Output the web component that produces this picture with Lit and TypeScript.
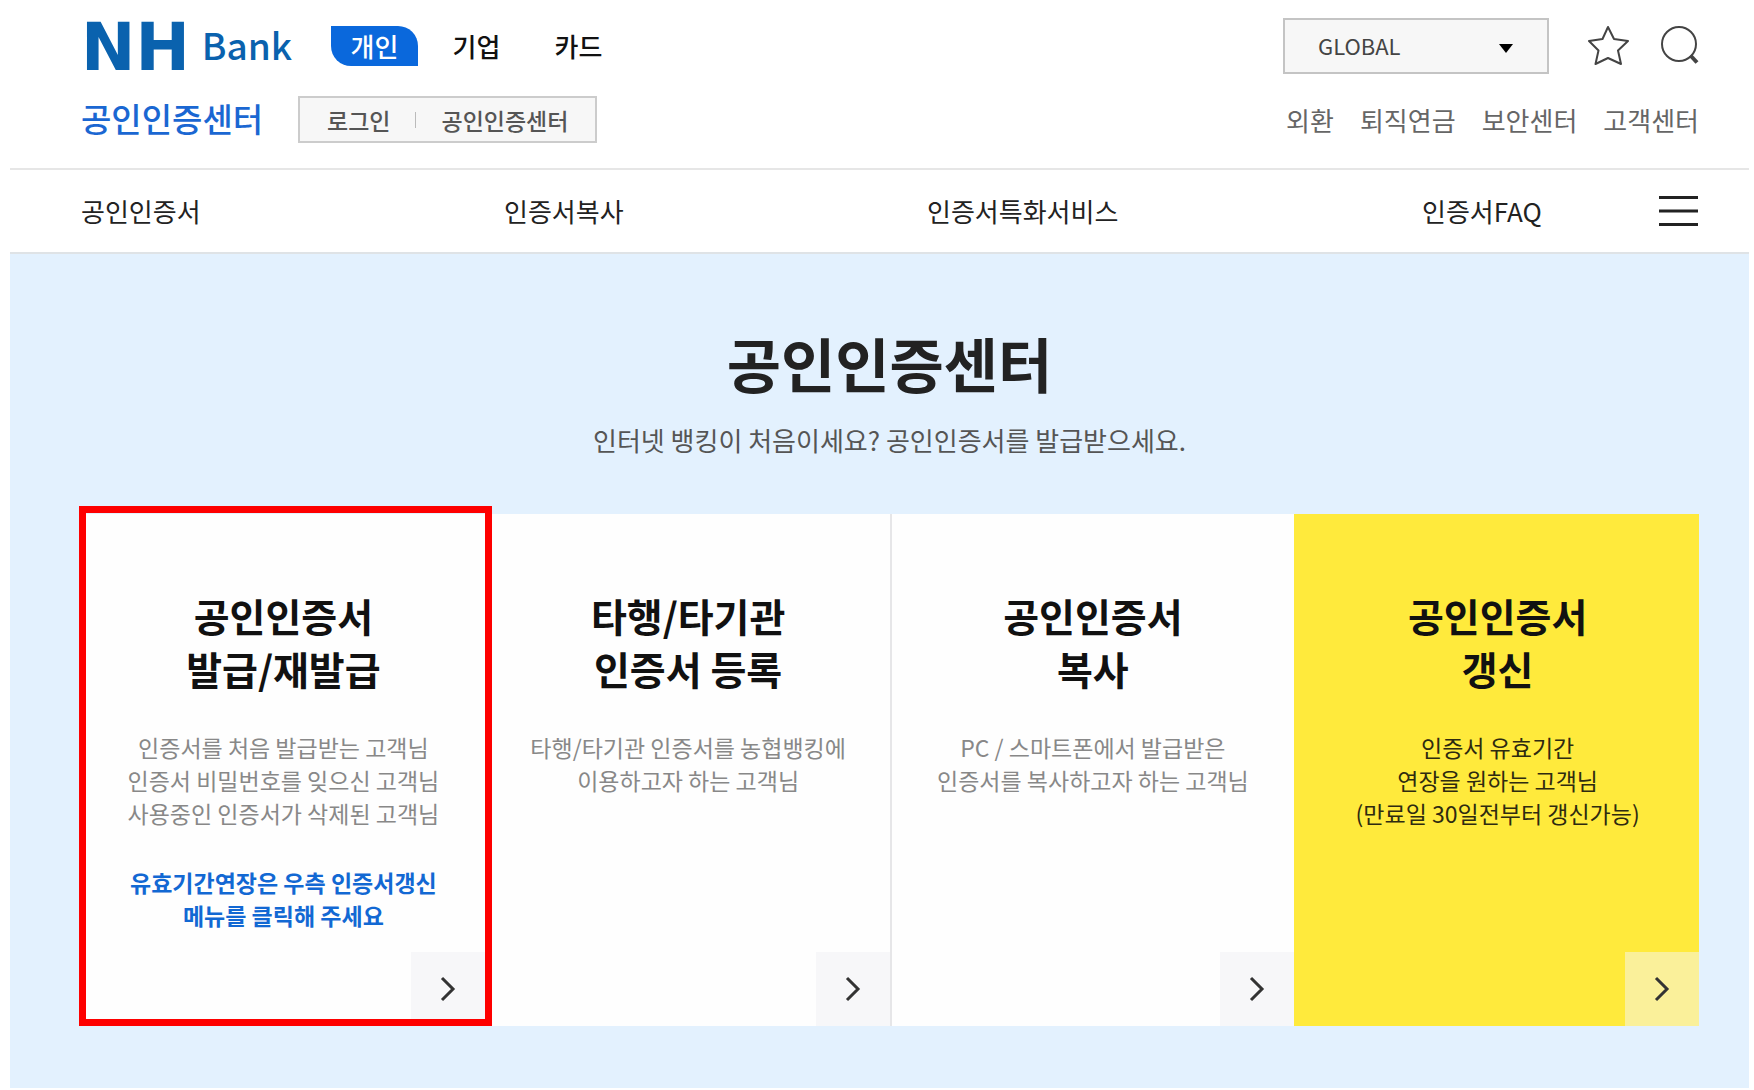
import { LitElement, html, css, nothing } from "lit";
import { customElement, property } from "lit/decorators.js";
import { classMap } from "lit/directives/class-map.js";

interface Service {
  title: string[];
  desc: string[];
  note?: string[];
  accent?: boolean;
  marked?: boolean;
}

const SERVICES: Service[] = [
  {
    title: ["공인인증서", "발급/재발급"],
    desc: ["인증서를 처음 발급받는 고객님", "인증서 비밀번호를 잊으신 고객님", "사용중인 인증서가 삭제된 고객님"],
    note: ["유효기간연장은 우측 인증서갱신", "메뉴를 클릭해 주세요"],
    marked: true,
  },
  {
    title: ["타행/타기관", "인증서 등록"],
    desc: ["타행/타기관 인증서를 농협뱅킹에", "이용하고자 하는 고객님"],
  },
  {
    title: ["공인인증서", "복사"],
    desc: ["PC / 스마트폰에서 발급받은", "인증서를 복사하고자 하는 고객님"],
  },
  {
    title: ["공인인증서", "갱신"],
    desc: ["인증서 유효기간", "연장을 원하는 고객님", "(만료일 30일전부터 갱신가능)"],
    accent: true,
  },
];

const lines = (rows: string[]) => rows.map((row) => html`<span class="line">${row}</span>`);

@customElement("service-card")
export class ServiceCard extends LitElement {
  @property({ attribute: false }) service!: Service;

  static styles = css`
    :host { display: flex; min-width: 0; }
    .card {
      position: relative;
      flex: 1;
      min-width: 0;
      display: flex;
      flex-direction: column;
      align-items: center;
      padding-top: 75px;
      background: #fefefe;
      border-left: 2px solid #e6e6e8;
      color: #888;
      text-align: center;
      text-decoration: none;
    }
    .accent { background: #ffea3c; border-left-color: #ffea3c; color: #2e2a10; }
    .line { display: block; }
    .title {
      margin: 0;
      font-size: 39px;
      line-height: 53px;
      font-weight: 700;
      color: #111;
    }
    .desc, .note { margin: 36px 0 0; font-size: 23px; line-height: 33px; }
    .note { color: #1268d3; font-weight: 700; }
    .go {
      align-self: flex-end;
      display: flex;
      align-items: center;
      justify-content: center;
      width: 74px;
      height: 74px;
      margin-top: auto;
      background: #f7f7f9;
      color: #333;
    }
    .accent .go { background: #faf09a; }
    .marked::after {
      content: "";
      position: absolute;
      inset: -8px -7px 0 -3px;
      border: 7px solid #fe0000;
      z-index: 1;
    }
  `;

  render() {
    const s = this.service;
    return html`
      <a href="#" class=${classMap({ card: true, accent: !!s.accent, marked: !!s.marked })}>
        <h2 class="title">${lines(s.title)}</h2>
        <p class="desc">${lines(s.desc)}</p>
        ${s.note ? html`<p class="note">${lines(s.note)}</p>` : nothing}
        <span class="go">
          <svg width="16" height="26" viewBox="0 0 16 26" fill="none" stroke="currentColor" stroke-width="3" aria-hidden="true">
            <path d="M2 2 L13 13 L2 24" />
          </svg>
        </span>
      </a>
    `;
  }
}

@customElement("app-root")
export class AppRoot extends LitElement {
  static styles = css`
    :host {
      display: block;
      padding: 0 5px 2px 10px;
      background: #fff;
      color: #222;
      font-family: "Noto Sans CJK KR", "Noto Sans", sans-serif;
      font-size: 26px;
      line-height: 36px;
    }
    a { color: inherit; text-decoration: none; }
    button { padding: 0; border: 0; background: none; color: inherit; font: inherit; cursor: pointer; }
    svg { display: block; }
    .header {
      display: flex;
      flex-direction: column;
      gap: 22px;
      padding: 18px 50px 25px 71px;
      border-bottom: 2px solid #e6e6e6;
    }
    .bar { display: flex; align-items: center; justify-content: space-between; }
    .top { height: 56px; }
    .sub { height: 47px; }
    .side { display: flex; align-items: center; }
    .logo { display: flex; align-items: center; gap: 12px; width: 250px; color: #0a62ae; white-space: nowrap; }
    .mark { padding-top: 4px; font: 700 65px/56px "DejaVu Sans", sans-serif; }
    .word { padding-bottom: 4px; font-size: 37px; line-height: 52px; font-weight: 500; }
    .tabs { display: flex; gap: 15px; }
    .tab { width: 87px; line-height: 40px; text-align: center; font-weight: 500; color: #111; }
    .current { background: #0a68dc; color: #fff; border-radius: 0 20px 0 20px; }
    .section { width: 217px; padding-bottom: 4px; font-size: 33px; line-height: 40px; font-weight: 500; color: #1a67d2; white-space: nowrap; }
    .account {
      display: flex;
      align-items: center;
      height: 47px;
      box-sizing: border-box;
      padding: 0 27px;
      border: 2px solid #ccc;
      background: #f7f7f7;
      font-size: 23px;
      font-weight: 500;
      color: #555;
    }
    .split { width: 1px; height: 16px; margin: 0 25px; background: #bbb; }
    .region { position: relative; color: #444; }
    .select {
      appearance: none;
      width: 266px;
      height: 56px;
      padding: 0 33px 2px;
      border: 2px solid #c4c4c4;
      border-radius: 0;
      background: #f7f7f7;
      color: inherit;
      font: 400 22px/30px "Noto Sans CJK KR", sans-serif;
    }
    .caret { position: absolute; right: 36px; top: 25px; pointer-events: none; }
    .star { margin-left: 39px; }
    .search { margin-left: 31px; }
    .links { display: flex; gap: 26px; color: #666; }
    .nav {
      display: grid;
      grid-template-columns: 423fr 423fr 495fr 237fr 40px;
      align-items: center;
      height: 82px;
      padding: 0 50px 0 71px;
      border-bottom: 2px solid #dfe3e6;
    }
    .main { padding: 73px 50px 62px 70px; background: #e3f1fe; }
    .heading { margin: 0; font-size: 59px; line-height: 72px; font-weight: 700; text-align: center; color: #222; }
    .lead { margin: 23px 0 56px; text-align: center; color: #555; }
    .cards { display: grid; grid-template-columns: repeat(4, 1fr); min-height: 512px; }
  `;

  render() {
    return html`
      <header class="header">
        <div class="bar top">
          <div class="side">
            <a class="logo" href="#"><span class="mark">NH</span><span class="word">Bank</span></a>
            <nav class="tabs">
              <a class="tab current" href="#">개인</a>
              <a class="tab" href="#">기업</a>
              <a class="tab" href="#">카드</a>
            </nav>
          </div>
          <div class="side">
            <div class="region">
              <select class="select" aria-label="GLOBAL"><option>GLOBAL</option></select>
              <svg class="caret" width="14" height="10" viewBox="0 0 14 10" aria-hidden="true"><path d="M0 1H14L7 10Z" fill="#000" /></svg>
            </div>
            <button class="star" type="button" aria-label="즐겨찾기">
              <svg width="42" height="42" viewBox="0 0 42 42" fill="none" stroke="#444" stroke-width="2" stroke-linejoin="round">
                <path d="M20 2 L26 14 L40 16 L30 25.500 L33 39 L20 33 L7.500 39 L10.500 25.500 L1 16 L14.500 14 Z" />
              </svg>
            </button>
            <button class="search" type="button" aria-label="검색">
              <svg width="38" height="42" viewBox="0 0 38 42" fill="none" stroke="#444" stroke-width="2">
                <circle cx="18" cy="19" r="17" />
                <path d="M29.500 30.500 L36 37.500" stroke-width="4" />
              </svg>
            </button>
          </div>
        </div>
        <div class="bar sub">
          <div class="side">
            <a class="section" href="#">공인인증센터</a>
            <div class="account">
              <a href="#">로그인</a>
              <span class="split"></span>
              <a href="#">공인인증센터</a>
            </div>
          </div>
          <nav class="links">
            <a href="#">외환</a>
            <a href="#">퇴직연금</a>
            <a href="#">보안센터</a>
            <a href="#">고객센터</a>
          </nav>
        </div>
      </header>
      <nav class="nav">
        <a href="#">공인인증서</a>
        <a href="#">인증서복사</a>
        <a href="#">인증서특화서비스</a>
        <a href="#">인증서FAQ</a>
        <button type="button" aria-label="전체메뉴">
          <svg width="40" height="32" viewBox="0 0 40 32" stroke="#222" stroke-width="3"><path d="M0 2.500H39M0 16H39M0 29.500H39" /></svg>
        </button>
      </nav>
      <main class="main">
        <h1 class="heading">공인인증센터</h1>
        <p class="lead">인터넷 뱅킹이 처음이세요? 공인인증서를 발급받으세요.</p>
        <div class="cards">
          ${SERVICES.map((s) => html`<service-card .service=${s}></service-card>`)}
        </div>
      </main>
    `;
  }
}
